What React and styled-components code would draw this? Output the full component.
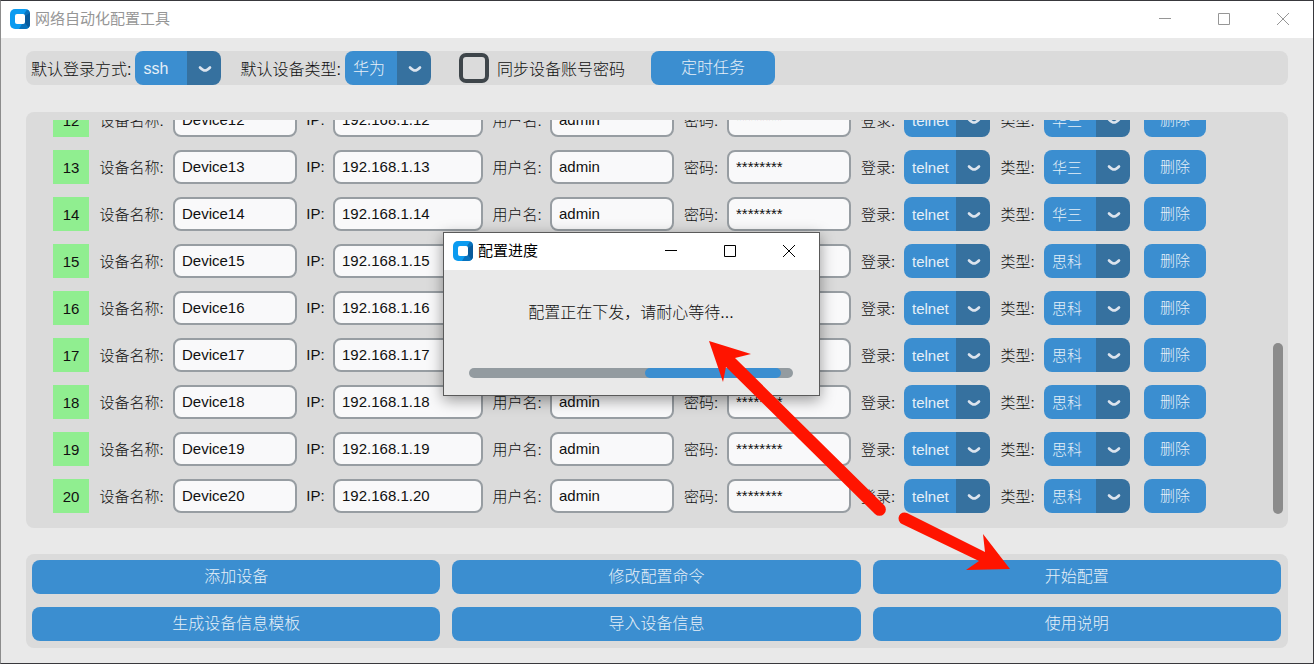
import styled, { createGlobalStyle } from "styled-components";
import { useState } from "react";

const GlobalStyle = createGlobalStyle`
  * {
    box-sizing: border-box;
  }
  body {
    margin: 0;
    font-family: "Liberation Sans", "Noto Sans CJK SC", sans-serif;
    font-size: 15px;
    color: #101010;
  }
  button, input, select {
    font: inherit;
    color: inherit;
    margin: 0;
  }
`;

const Window = styled.div`
  position: relative;
  display: flex;
  flex-direction: column;
  height: 100vh;
  min-height: 480px;
  background-color: #e9e9e9;
  border: 1px solid #38383c;
  border-left-color: #8c8c8c;
  overflow: hidden;
`;

const TitleBar = styled.header`
  display: flex;
  align-items: center;
  flex-shrink: 0;
  height: 37px;
  padding: 0 1px 1px 9px;
  background-color: #ffffff;
  color: ${(props) => (props.$active ? "#000000" : "#969696")};
`;

const Title = styled.h1`
  flex: 1;
  margin: 0 0 0 5px;
  font-size: 15px;
  font-weight: 400;
  line-height: 20px;
`;

const WindowBtn = styled.button`
  display: flex;
  justify-content: center;
  align-items: center;
  width: 59px;
  height: 36px;
  padding: 0;
  border: none;
  background: none;
`;

const Content = styled.main`
  display: flex;
  flex-direction: column;
  flex: 1;
  min-height: 0;
  padding: 13px 25px 15px;
`;

const Toolbar = styled.section`
  display: flex;
  align-items: center;
  flex-shrink: 0;
  height: 34px;
  padding-left: 5px;
  background-color: #dbdbdb;
  border-radius: 8px;
  font-size: 16px;
`;

const Field = styled.label`
  display: flex;
  align-items: center;
  gap: 4px;
  margin-right: 19px;
  font-weight: 300;
  white-space: nowrap;
`;

const SelectBox = styled.span`
  position: relative;
  display: block;
  width: 86px;
  height: 34px;
`;

const Select = styled.select`
  appearance: none;
  width: 100%;
  height: 100%;
  padding: 0 34px 0 8px;
  border: none;
  border-radius: 8px;
  background: linear-gradient(to left, #36719f 34px, #3b8ed0 34px);
  color: #e6f0f8;
  font-weight: 300;
`;

const Arrow = styled.svg`
  position: absolute;
  right: 9px;
  top: 14px;
  pointer-events: none;
`;

const CheckLabel = styled.label`
  display: flex;
  align-items: center;
  gap: 8px;
  margin: 0 26px 0 9px;
  font-weight: 300;
  white-space: nowrap;
`;

const Checkbox = styled.input`
  appearance: none;
  width: 30px;
  height: 30px;
  border: 4px solid #3e454a;
  border-radius: 7px;

  &:checked {
    border-color: #3b8ed0;
    background-color: #3b8ed0;
  }
`;

const Btn = styled.button`
  width: ${(props) => props.$width || "100%"};
  height: 34px;
  padding: 0 0 4px;
  border: none;
  border-radius: 8px;
  background-color: #3b8ed0;
  color: #e6f0f8;
  font-weight: 300;
`;

const DevicePanel = styled.section`
  display: flex;
  flex: 1;
  min-height: 0;
  margin: 27px 0 26px;
  padding: 8px 5px 8px 27px;
  background-color: #dbdbdb;
  border-radius: 8px;
`;

// column-reverse keeps the list scrolled to the last device
const DeviceScroll = styled.div`
  display: flex;
  flex-direction: column-reverse;
  flex: 1;
  min-width: 0;
  overflow: auto;
  scrollbar-width: none;
`;

const DeviceList = styled.ul`
  display: flex;
  flex-direction: column;
  flex-shrink: 0;
  gap: 13px;
  margin: 0;
  padding: 0 0 7px;
  list-style: none;
`;

const DeviceRow = styled.li`
  display: grid;
  grid-template-columns: 36px 84px 124px 36px 150px 67px 124px 53px 124px 53px 86px 54px 86px 76px;
  align-items: center;
  height: 34px;

  & > button {
    margin-left: 14px;
  }
`;

const Num = styled.span`
  height: 34px;
  background-color: #90ee90;
  line-height: 35px;
  text-align: center;
`;

const Label = styled.label`
  padding: 0 0 2px 1px;
  font-weight: 300;
  text-align: center;
  white-space: nowrap;
`;

const Input = styled.input`
  width: 100%;
  height: 34px;
  padding: 0 7px 1px;
  border: 2px solid #979da2;
  border-radius: 8px;
  background-color: #f9f9fa;
`;

const ScrollTrack = styled.div`
  display: flex;
  align-items: flex-end;
  width: 10px;
  padding-bottom: 6px;
`;

const ScrollThumb = styled.div`
  width: 10px;
  height: 43.5%;
  border-radius: 5px;
  background-color: #8b8b8b;
`;

const Actions = styled.section`
  display: grid;
  grid-template-columns: repeat(3, 1fr);
  gap: 13px 12px;
  flex-shrink: 0;
  padding: 6px 7px 7px 6px;
  background-color: #dbdbdb;
  border-radius: 8px;
  font-size: 16px;
`;

const Dialog = styled.div`
  position: absolute;
  left: 442px;
  top: 231px;
  width: 377px;
  border: 1px solid #5a5a5a;
  background-color: #e9e9e9;
  box-shadow: 0 4px 14px rgba(0, 0, 0, 0.4);
`;

const DialogBody = styled.div`
  padding: 31px 26px 17px 25px;
`;

const Message = styled.p`
  margin: 0 0 43px;
  font-size: 16px;
  font-weight: 300;
  line-height: 24px;
  text-align: center;
`;

const Progress = styled.div`
  height: 10px;
  padding: 0 12px 0 176px;
  border-radius: 5px;
  background-color: #939ba0;
`;

const ProgressBar = styled.div`
  height: 10px;
  border-radius: 5px;
  background-color: #3b8ed0;
`;

const Pointers = styled.svg`
  position: absolute;
  left: -1px;
  top: -1px;
  pointer-events: none;
`;

const devices = [12, 13, 14, 15, 16, 17, 18, 19, 20].map((id) => ({
  id,
  name: `Device${id}`,
  ip: `192.168.1.${id}`,
  user: "admin",
  password: "********",
  login: "telnet",
  type: id < 15 ? "华三" : "思科",
}));

const loginTypes = ["ssh", "telnet"];
const deviceTypes = ["华为", "华三", "思科"];
const actions = [
  "添加设备",
  "修改配置命令",
  "开始配置",
  "生成设备信息模板",
  "导入设备信息",
  "使用说明",
];

function Logo() {
  return (
    <svg width="20" height="20" viewBox="0 0 20 20" aria-hidden="true">
      <rect width="20" height="20" rx="5" fill="#0b9bf0" />
      <path d="M14 5L17 0.500Q20 1 20 5V15Q20 20 15 20H9L12 15H14Z" fill="#0872bd" />
      <path d="M15 7L20 4V15Q20 17 18.500 18.500L15 14Z" fill="#075a9c" />
      <rect x="5" y="5" width="10" height="10" rx="2" fill="#fff" />
    </svg>
  );
}

function WindowButtons() {
  return (
    <>
      <WindowBtn aria-label="最小化">
        <svg width="12" height="12" stroke="currentColor">
          <path d="M0 5.500H12" />
        </svg>
      </WindowBtn>
      <WindowBtn aria-label="最大化">
        <svg width="12" height="12" stroke="currentColor" fill="none">
          <path d="M.5 .5H11.500V11.500H.5Z" />
        </svg>
      </WindowBtn>
      <WindowBtn aria-label="关闭">
        <svg width="12" height="12" stroke="currentColor">
          <path d="M0 0L12 12M12 0L0 12" />
        </svg>
      </WindowBtn>
    </>
  );
}

function Dropdown({ id, value, options }) {
  const [selected, setSelected] = useState(value);

  return (
    <SelectBox>
      <Select id={id} value={selected} onChange={(e) => setSelected(e.target.value)}>
        {options.map((option) => (
          <option key={option}>{option}</option>
        ))}
      </Select>
      <Arrow width="14" height="8" viewBox="0 0 14 8" fill="none">
        <path
          d="M2 2.500Q5 5.500 7 5.500Q9 5.500 12 2.500"
          stroke="#dce4ee"
          strokeWidth="2.600"
          strokeLinecap="round"
          strokeLinejoin="round"
        />
      </Arrow>
    </SelectBox>
  );
}

function Device({ device }) {
  const { id } = device;

  return (
    <DeviceRow>
      <Num>{id}</Num>
      <Label htmlFor={`name${id}`}>设备名称:</Label>
      <Input id={`name${id}`} defaultValue={device.name} />
      <Label htmlFor={`ip${id}`}>IP:</Label>
      <Input id={`ip${id}`} defaultValue={device.ip} />
      <Label htmlFor={`user${id}`}>用户名:</Label>
      <Input id={`user${id}`} defaultValue={device.user} />
      <Label htmlFor={`password${id}`}>密码:</Label>
      <Input id={`password${id}`} defaultValue={device.password} />
      <Label htmlFor={`login${id}`}>登录:</Label>
      <Dropdown id={`login${id}`} value={device.login} options={loginTypes} />
      <Label htmlFor={`type${id}`}>类型:</Label>
      <Dropdown id={`type${id}`} value={device.type} options={deviceTypes} />
      <Btn $width="62px">删除</Btn>
    </DeviceRow>
  );
}

export default function App() {
  return (
    <Window>
      <GlobalStyle />
      <TitleBar>
        <Logo />
        <Title>网络自动化配置工具</Title>
        <WindowButtons />
      </TitleBar>

      <Content>
        <Toolbar>
          <Field>
            默认登录方式:
            <Dropdown value="ssh" options={loginTypes} />
          </Field>
          <Field>
            默认设备类型:
            <Dropdown value="华为" options={deviceTypes} />
          </Field>
          <CheckLabel>
            <Checkbox type="checkbox" />
            同步设备账号密码
          </CheckLabel>
          <Btn $width="124px">定时任务</Btn>
        </Toolbar>

        <DevicePanel>
          <DeviceScroll>
            <DeviceList>
              {devices.map((device) => (
                <Device key={device.id} device={device} />
              ))}
            </DeviceList>
          </DeviceScroll>
          <ScrollTrack>
            <ScrollThumb />
          </ScrollTrack>
        </DevicePanel>

        <Actions>
          {actions.map((action) => (
            <Btn key={action}>{action}</Btn>
          ))}
        </Actions>
      </Content>

      <Dialog role="dialog" aria-label="配置进度">
        <TitleBar $active>
          <Logo />
          <Title as="h2">配置进度</Title>
          <WindowButtons />
        </TitleBar>
        <DialogBody>
          <Message>配置正在下发，请耐心等待...</Message>
          <Progress role="progressbar" aria-label="配置进度">
            <ProgressBar />
          </Progress>
        </DialogBody>
      </Dialog>

      <Pointers width="1314" height="664" fill="#ff1400" aria-hidden="true">
        <path d="M709 341L751 354L735 358L884 505A6 6 0 0 1 875 514L726 367L723 382Z" />
        <path d="M1010 569L983 534L985 552L907 513A6 6 0 0 0 902 524L979 561L966 570Z" />
      </Pointers>
    </Window>
  );
}
